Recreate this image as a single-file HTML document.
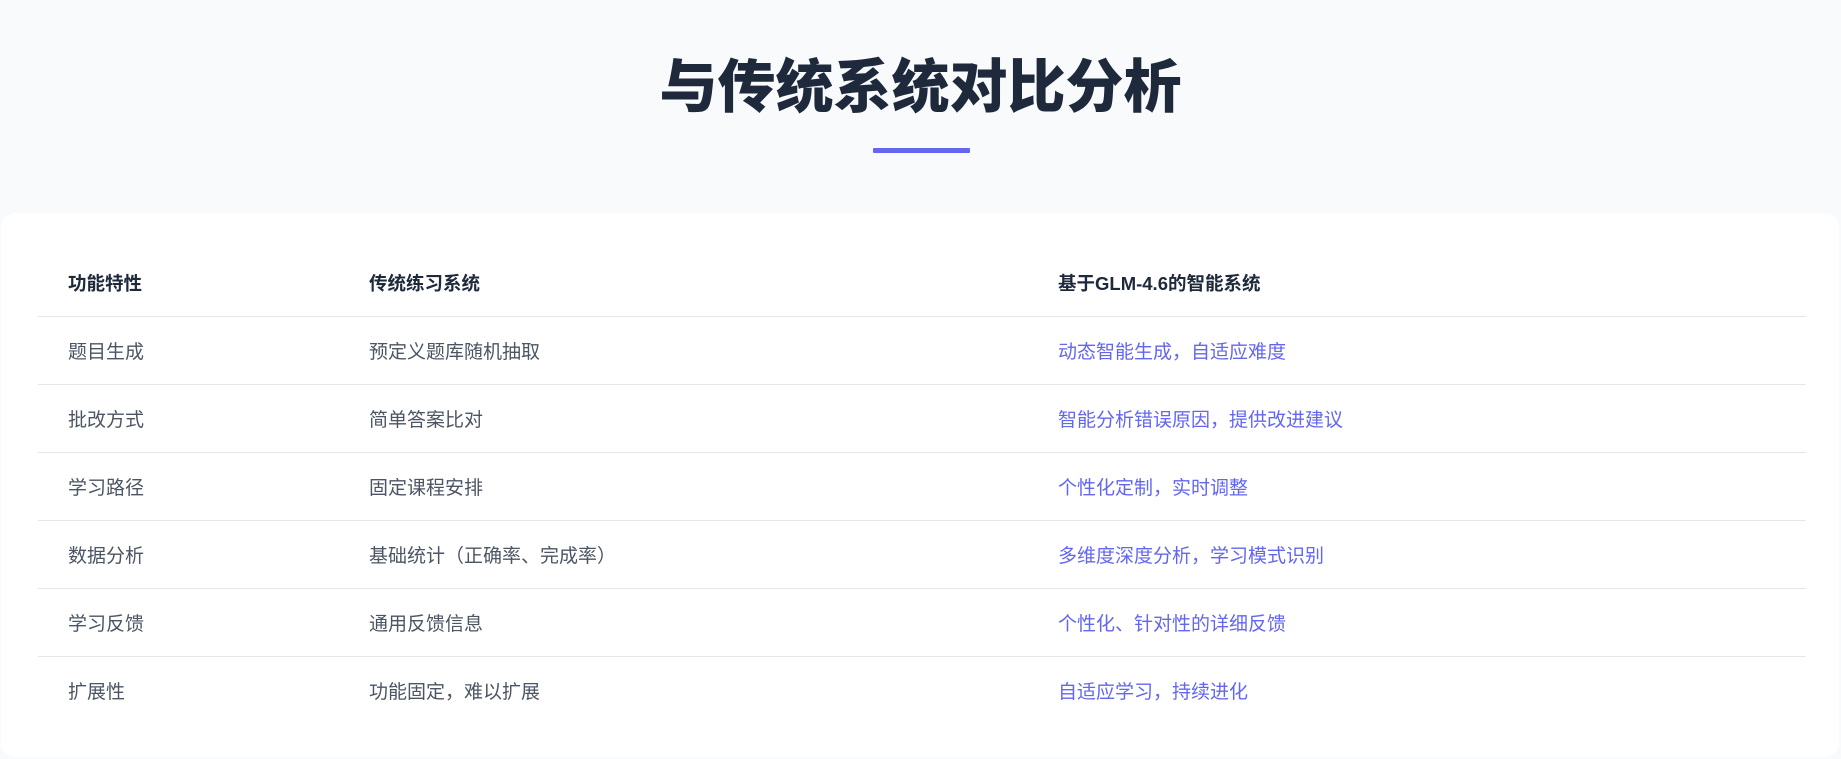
<!DOCTYPE html>
<html><head><meta charset="utf-8"><style>
*{margin:0;padding:0;box-sizing:border-box}
body{width:1841px;height:759px;background:#f8fafc;font-family:"Liberation Sans","Noto Sans CJK SC",sans-serif;overflow:hidden;position:relative}
h1{position:absolute;top:50px;left:0;width:1841px;text-align:center;font-size:58px;line-height:76px;font-weight:900;color:#1e293b;letter-spacing:0}
.bar{position:absolute;left:873px;top:148px;width:97px;height:5px;background:#6366f1;border-radius:1px}
.card{position:absolute;left:1px;top:213px;width:1838px;height:544px;background:#fff;border-radius:14px}
table{position:absolute;left:37px;top:37px;width:1768px;border-collapse:collapse}
td,th{text-align:left;font-size:19px;color:#4b5563;height:68px;border-bottom:1px solid #e5e7eb;vertical-align:middle;font-weight:400}
th{font-weight:700;color:#1e293b;height:66px;font-size:18.5px}
td:nth-child(1),th:nth-child(1){padding-left:30px;width:331px}
td:nth-child(2),th:nth-child(2){width:689px}
td:nth-child(3){color:#6366f1}
tr:last-child td{border-bottom:none}
</style></head><body>
<h1>与传统系统对比分析</h1>
<div class="bar"></div>
<div class="card"><table>
<tr><th>功能特性</th><th>传统练习系统</th><th>基于GLM-4.6的智能系统</th></tr>
<tr><td>题目生成</td><td>预定义题库随机抽取</td><td>动态智能生成，自适应难度</td></tr>
<tr><td>批改方式</td><td>简单答案比对</td><td>智能分析错误原因，提供改进建议</td></tr>
<tr><td>学习路径</td><td>固定课程安排</td><td>个性化定制，实时调整</td></tr>
<tr><td>数据分析</td><td>基础统计（正确率、完成率）</td><td>多维度深度分析，学习模式识别</td></tr>
<tr><td>学习反馈</td><td>通用反馈信息</td><td>个性化、针对性的详细反馈</td></tr>
<tr><td>扩展性</td><td>功能固定，难以扩展</td><td>自适应学习，持续进化</td></tr>
</table></div>
</body></html>
